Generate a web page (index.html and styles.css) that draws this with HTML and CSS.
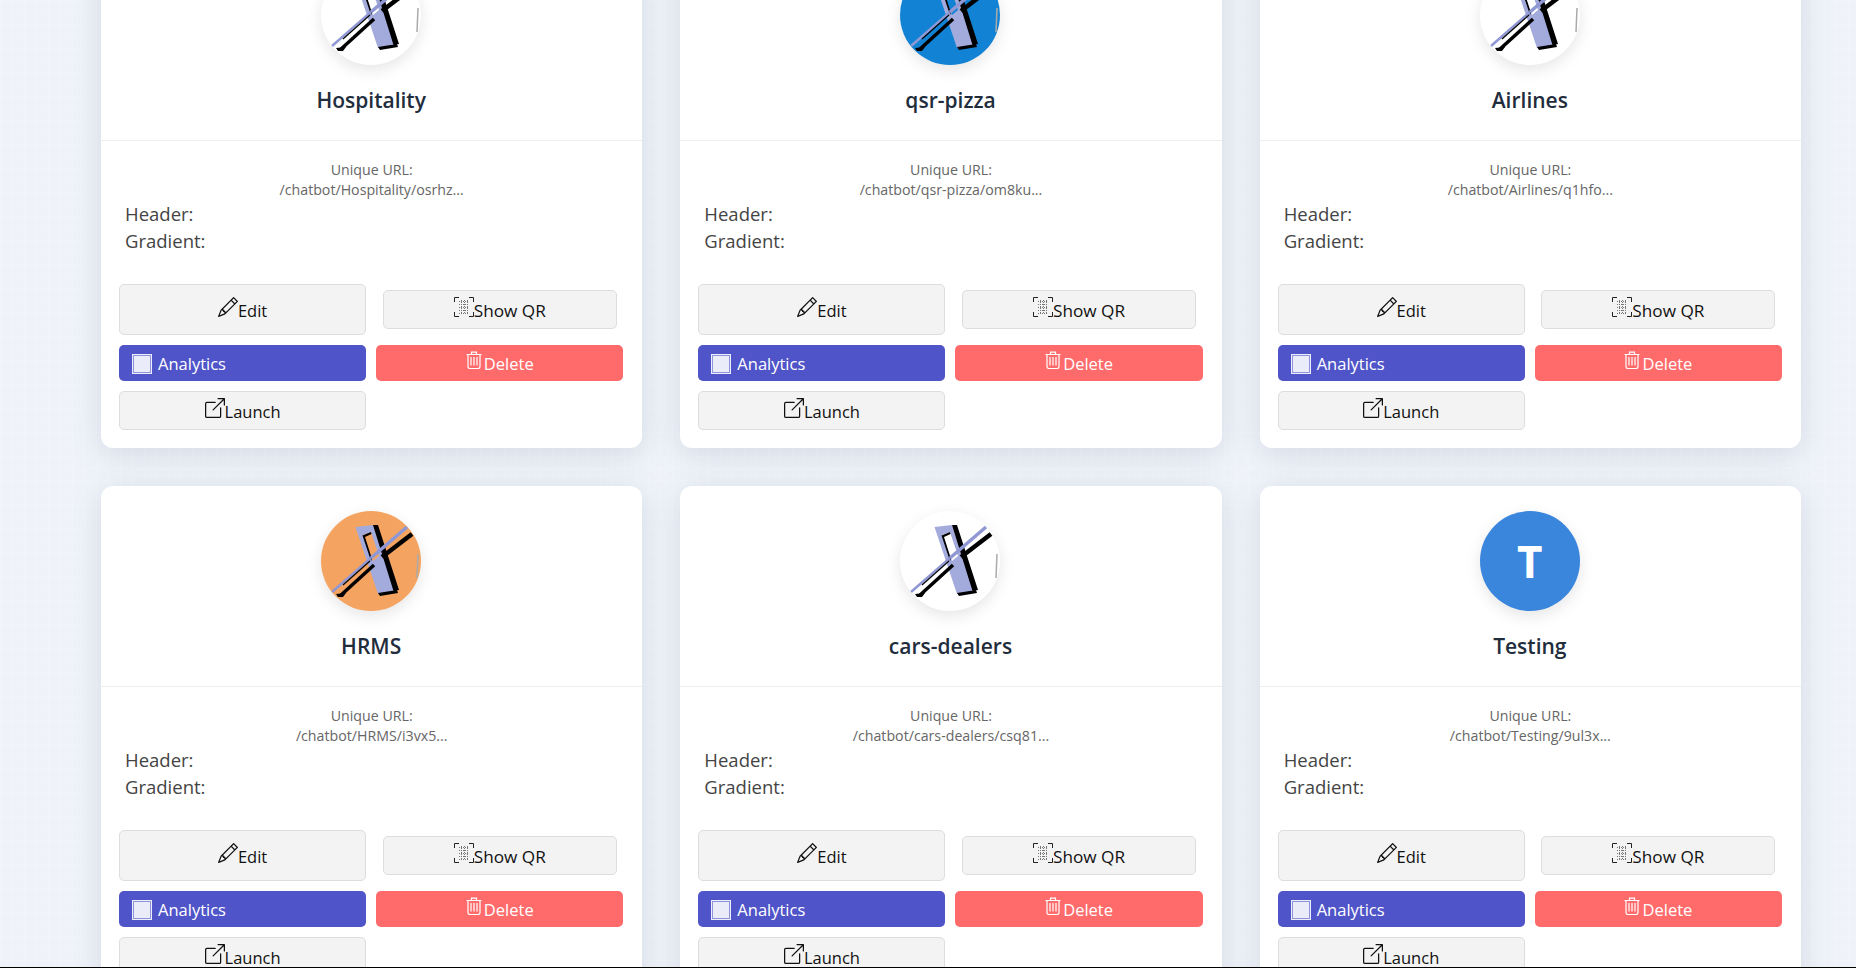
FILE: index.html
```html
<!DOCTYPE html>
<html lang="en">
<head>
    <meta charset="UTF-8">
    <meta name="viewport" content="width=device-width, initial-scale=1.0">
    <title>Chatbots</title>
    <link rel="stylesheet" href="styles.css">
</head>
<body>
    <svg class="sprites" aria-hidden="true">
        <symbol id="logo" viewBox="5 5 100 100">
            <path fill="#a3abdc" fill-rule="evenodd" d="M39.5 21 57 19 80 85 62 88ZM47 29 55 26 63 50 57 55Z"/>
            <path fill="#000" d="M57 19 62 19 83 84 77.500 85ZM62 87 81 84 82 87 64 90ZM46.500 29.500 55 26 55.500 28 49 31 56 53 55 55Z"/>
            <path fill="none" stroke="#8f98d4" stroke-width="2.500" d="M16 86 55 52"/>
            <path fill="none" stroke="#8f98d4" stroke-width="3.500" d="M55 52 91 21"/>
            <path fill="none" stroke="#000" stroke-width="1.200" d="M27 79 54 55"/>
            <path fill="none" stroke="#000" stroke-width="3.500" d="M24 90 58 59"/>
            <path fill="none" stroke="#000" stroke-width="4.500" d="M66 51 96 28"/>
            <path fill="#000" d="M20 88 30 87 27 91 22 91Z"/>
            <path fill="none" stroke="#aaa" stroke-width="1.500" d="M102 48 101 72"/>
        </symbol>
        <symbol id="i-pencil" viewBox="0 0 16 16">
            <path fill="currentColor" d="M12.146.146a.5.5 0 0 1 .708 0l3 3a.5.5 0 0 1 0 .708l-10 10a.5.5 0 0 1-.168.11l-5 2a.5.5 0 0 1-.65-.65l2-5a.5.5 0 0 1 .11-.168zM11.207 2.5 13.5 4.793 14.793 3.5 12.5 1.207zm1.586 3L10.5 3.207 4 9.707V10h.5a.5.5 0 0 1 .5.5v.5h.5a.5.5 0 0 1 .5.5v.5h.293zm-9.761 5.175-.106.106-1.528 3.821 3.821-1.528.106-.106A.5.5 0 0 1 5 12.500V12h-.5a.5.5 0 0 1-.5-.5V11h-.5a.5.5 0 0 1-.468-.325"/>
        </symbol>
        <symbol id="i-qr" viewBox="0 0 20 20">
            <path fill="none" stroke="#222" stroke-width="1" d="M.5 5V.5H5M15 .5h4.500V5M.5 15v4.500H5M15 19.500h4.500V15"/>
            <path fill="none" stroke="#777" stroke-width="1" stroke-dasharray="1 1" d="M5 4.500h10M5 7.500h10M5 10.500h10M5 13.500h10M5 16.500h10M7.500 3v14M10.500 3v14M13.500 3v14"/>
        </symbol>
        <symbol id="i-square" viewBox="0 0 20 20">
            <rect x=".5" y=".5" width="19" height="19" fill="none" stroke="#eceefa"/>
            <rect x="1.500" y="1.500" width="17" height="17" fill="none" stroke="#8f93dc"/>
            <rect x="2" y="2" width="16" height="16" fill="#eaecf9"/>
        </symbol>
        <symbol id="i-trash" viewBox="0 0 16 18">
            <path fill="none" stroke="currentColor" stroke-width="1.200" d="M.5 3.500h15M5.500 3V1.200h5V3M2 4v11.500A2 2 0 0 0 4 17.500h8a2 2 0 0 0 2-2V4"/>
            <path fill="none" stroke="currentColor" stroke-width="1.200" d="M5 6v8.500M8 6v8.500M11 6v8.500"/>
        </symbol>
        <symbol id="i-launch" viewBox="0 0 16 16">
            <path fill="currentColor" d="M8.636 3.500a.5.5 0 0 0-.5-.5H1.500A1.500 1.500 0 0 0 0 4.500v10A1.500 1.500 0 0 0 1.500 16h10a1.500 1.500 0 0 0 1.500-1.500V7.864a.5.5 0 0 0-1 0V14.500a.5.5 0 0 1-.5.5h-10a.5.5 0 0 1-.5-.5v-10a.5.5 0 0 1 .5-.5h6.636a.5.5 0 0 0 .5-.5"/>
            <path fill="currentColor" d="M16 .5a.5.5 0 0 0-.5-.5h-5a.5.5 0 0 0 0 1h3.793L6.146 9.146a.5.5 0 1 0 .708.708L15 1.707V5.500a.5.5 0 0 0 1 0z"/>
        </symbol>
    </svg>

    <main class="page">
        <div class="card-grid">

            <article class="card">
                <header class="card-head">
                    <div class="avatar avatar-white"><svg class="logo"><use href="#logo"/></svg></div>
                    <h2 class="card-name">Hospitality</h2>
                </header>
                <div class="card-body">
                    <p class="url">Unique URL:<br>/chatbot/Hospitality/osrhz...</p>
                    <div class="meta">Header:</div>
                    <div class="meta">Gradient:</div>
                </div>
                <div class="actions">
                    <button class="btn"><svg class="icon"><use href="#i-pencil"/></svg>Edit</button>
                    <button class="btn btn-qr"><svg class="icon"><use href="#i-qr"/></svg>Show QR</button>
                    <button class="btn btn-analytics"><svg class="icon"><use href="#i-square"/></svg>Analytics</button>
                    <button class="btn btn-delete"><svg class="icon-trash"><use href="#i-trash"/></svg>Delete</button>
                    <button class="btn"><svg class="icon"><use href="#i-launch"/></svg>Launch</button>
                </div>
            </article>

            <article class="card">
                <header class="card-head">
                    <div class="avatar avatar-blue"><svg class="logo"><use href="#logo"/></svg></div>
                    <h2 class="card-name">qsr-pizza</h2>
                </header>
                <div class="card-body">
                    <p class="url">Unique URL:<br>/chatbot/qsr-pizza/om8ku...</p>
                    <div class="meta">Header:</div>
                    <div class="meta">Gradient:</div>
                </div>
                <div class="actions">
                    <button class="btn"><svg class="icon"><use href="#i-pencil"/></svg>Edit</button>
                    <button class="btn btn-qr"><svg class="icon"><use href="#i-qr"/></svg>Show QR</button>
                    <button class="btn btn-analytics"><svg class="icon"><use href="#i-square"/></svg>Analytics</button>
                    <button class="btn btn-delete"><svg class="icon-trash"><use href="#i-trash"/></svg>Delete</button>
                    <button class="btn"><svg class="icon"><use href="#i-launch"/></svg>Launch</button>
                </div>
            </article>

            <article class="card">
                <header class="card-head">
                    <div class="avatar avatar-white"><svg class="logo"><use href="#logo"/></svg></div>
                    <h2 class="card-name">Airlines</h2>
                </header>
                <div class="card-body">
                    <p class="url">Unique URL:<br>/chatbot/Airlines/q1hfo...</p>
                    <div class="meta">Header:</div>
                    <div class="meta">Gradient:</div>
                </div>
                <div class="actions">
                    <button class="btn"><svg class="icon"><use href="#i-pencil"/></svg>Edit</button>
                    <button class="btn btn-qr"><svg class="icon"><use href="#i-qr"/></svg>Show QR</button>
                    <button class="btn btn-analytics"><svg class="icon"><use href="#i-square"/></svg>Analytics</button>
                    <button class="btn btn-delete"><svg class="icon-trash"><use href="#i-trash"/></svg>Delete</button>
                    <button class="btn"><svg class="icon"><use href="#i-launch"/></svg>Launch</button>
                </div>
            </article>

            <article class="card">
                <header class="card-head">
                    <div class="avatar avatar-orange"><svg class="logo"><use href="#logo"/></svg></div>
                    <h2 class="card-name">HRMS</h2>
                </header>
                <div class="card-body">
                    <p class="url">Unique URL:<br>/chatbot/HRMS/i3vx5...</p>
                    <div class="meta">Header:</div>
                    <div class="meta">Gradient:</div>
                </div>
                <div class="actions">
                    <button class="btn"><svg class="icon"><use href="#i-pencil"/></svg>Edit</button>
                    <button class="btn btn-qr"><svg class="icon"><use href="#i-qr"/></svg>Show QR</button>
                    <button class="btn btn-analytics"><svg class="icon"><use href="#i-square"/></svg>Analytics</button>
                    <button class="btn btn-delete"><svg class="icon-trash"><use href="#i-trash"/></svg>Delete</button>
                    <button class="btn"><svg class="icon"><use href="#i-launch"/></svg>Launch</button>
                </div>
            </article>

            <article class="card">
                <header class="card-head">
                    <div class="avatar avatar-white"><svg class="logo"><use href="#logo"/></svg></div>
                    <h2 class="card-name">cars-dealers</h2>
                </header>
                <div class="card-body">
                    <p class="url">Unique URL:<br>/chatbot/cars-dealers/csq81...</p>
                    <div class="meta">Header:</div>
                    <div class="meta">Gradient:</div>
                </div>
                <div class="actions">
                    <button class="btn"><svg class="icon"><use href="#i-pencil"/></svg>Edit</button>
                    <button class="btn btn-qr"><svg class="icon"><use href="#i-qr"/></svg>Show QR</button>
                    <button class="btn btn-analytics"><svg class="icon"><use href="#i-square"/></svg>Analytics</button>
                    <button class="btn btn-delete"><svg class="icon-trash"><use href="#i-trash"/></svg>Delete</button>
                    <button class="btn"><svg class="icon"><use href="#i-launch"/></svg>Launch</button>
                </div>
            </article>

            <article class="card">
                <header class="card-head">
                    <div class="avatar avatar-letter">T</div>
                    <h2 class="card-name">Testing</h2>
                </header>
                <div class="card-body">
                    <p class="url">Unique URL:<br>/chatbot/Testing/9ul3x...</p>
                    <div class="meta">Header:</div>
                    <div class="meta">Gradient:</div>
                </div>
                <div class="actions">
                    <button class="btn"><svg class="icon"><use href="#i-pencil"/></svg>Edit</button>
                    <button class="btn btn-qr"><svg class="icon"><use href="#i-qr"/></svg>Show QR</button>
                    <button class="btn btn-analytics"><svg class="icon"><use href="#i-square"/></svg>Analytics</button>
                    <button class="btn btn-delete"><svg class="icon-trash"><use href="#i-trash"/></svg>Delete</button>
                    <button class="btn"><svg class="icon"><use href="#i-launch"/></svg>Launch</button>
                </div>
            </article>

        </div>
    </main>
</body>
</html>
```

FILE: styles.css
```css
* {
    box-sizing: border-box;
}

html, body {
    margin: 0;
    padding: 0;
    height: 100%;
    overflow: hidden;
}

body {
    font-family: "Open Sans", "Noto Sans", Arial, sans-serif;
    background-color: #eff3f9;
    background-image:
        linear-gradient(rgba(255, 255, 255, 0.15) 1px, transparent 1px),
        linear-gradient(90deg, rgba(255, 255, 255, 0.15) 1px, transparent 1px);
    background-size: 12px 12px;
}

.sprites {
    display: none;
}

.page {
    height: 968px;
    padding: 0 55px 0 101px;
    overflow: hidden;
    border-bottom: 1px solid #000;
}

.card-grid {
    display: grid;
    grid-template-columns: repeat(3, 1fr);
    gap: 38px;
    margin-top: -60px;
}

.card {
    height: 508px;
    background-color: #fff;
    border-radius: 12px;
    box-shadow: 0 6px 30px rgba(90, 105, 140, 0.18);
}

.card-head {
    height: 201px;
    padding: 25px 1px 0 0;
    text-align: center;
    border-bottom: 1px solid #eeeeee;
}

.avatar {
    width: 100px;
    height: 100px;
    margin: 0 auto;
    border-radius: 50%;
    overflow: hidden;
    box-shadow: 0 5px 15px rgba(0, 0, 0, 0.1);
}

.avatar-white {
    background-color: #fff;
}

.avatar-blue {
    background-color: #1283d4;
}

.avatar-orange {
    background-color: #f4a460;
}

.avatar-letter {
    background-color: #3a86dd;
    color: #fff;
    font-size: 44px;
    font-weight: 700;
    line-height: 100px;
}

.logo {
    display: block;
    width: 100px;
    height: 100px;
    filter: blur(0.4px);
}

.card-name {
    margin: 20px 0 0;
    font-size: 21px;
    font-weight: 600;
    line-height: 30px;
    color: #1f2d3d;
}

.card-body {
    height: 143px;
    padding: 19px 24px 0;
}

.url {
    margin: 0;
    font-size: 14.2px;
    line-height: 20px;
    text-align: center;
    color: #666;
}

.meta {
    font-size: 18.5px;
    line-height: 27px;
    color: #444;
}

.actions {
    display: grid;
    grid-template-columns: 1fr 1fr;
    grid-template-rows: 51px 36px 39px;
    gap: 10px;
    padding: 0 19px 0 18px;
}

.btn {
    padding: 0 12px;
    font-family: inherit;
    font-size: 16.5px;
    line-height: 25px;
    color: #111;
    background-color: #f3f3f3;
    border: 1px solid #dddddd;
    border-radius: 5px;
}

.btn-qr {
    margin: 6px 6.5px;
    font-size: 17.2px;
}

.btn-analytics {
    padding: 0 13px;
    text-align: left;
    color: #fff;
    background-color: #4f54c8;
    border: none;
}

.btn-analytics .icon {
    margin-right: 6px;
    vertical-align: -4px;
}

.btn-delete {
    color: #fff;
    background-color: #ff6b6b;
    border: none;
}

.icon {
    width: 20px;
    height: 20px;
}

.icon-trash {
    width: 16px;
    height: 18px;
    margin-right: 2px;
    vertical-align: 1px;
}
```
